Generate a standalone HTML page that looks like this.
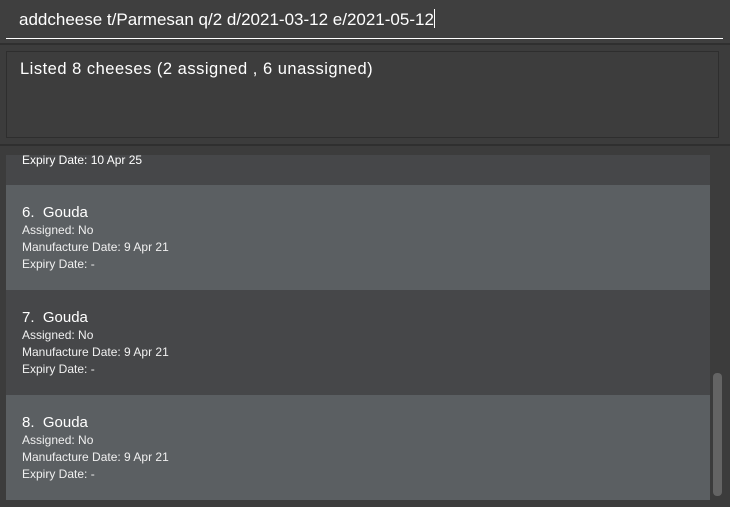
<!DOCTYPE html>
<html><head><style>
*{margin:0;padding:0;box-sizing:border-box}
body{width:730px;height:507px;background:#3c3c3c;font-family:"Liberation Sans",sans-serif;color:#fff;position:relative;overflow:hidden}
.abs{position:absolute}
.cmd{left:0;top:0;width:730px;height:43px;background:#3f3f3f}
.cmd .t{left:19px;top:9px;font-size:17px;letter-spacing:0;white-space:nowrap}
.cmd .u{left:6px;top:38px;width:717px;height:1px;background:#fff}
.sep{left:0;width:730px;height:2px;background:#2f2f2f}
.res{left:6px;top:51px;width:713px;height:87px;border:1px solid #2e2e2e;background:#3d3d3d}
.res .t{left:13px;top:8px;font-size:16.5px;letter-spacing:0.5px;white-space:nowrap}
.cell{left:6px;width:704px;height:105px}
.a{background:#5b5f62}.b{background:#464749}
.cell .h{position:absolute;left:16px;top:19px;font-size:15px;letter-spacing:0}
.cell .d{position:absolute;left:16px;font-size:12px;letter-spacing:0;color:#f0f0f0}
</style></head><body>
<div class="abs cmd"><div class="abs t">addcheese t/Parmesan q/2 d/2021-03-12 e/2021-05-12<span style="display:inline-block;width:1px;height:19px;background:#fff;vertical-align:-3px"></span></div><div class="abs u"></div></div>
<div class="abs sep" style="top:43px"></div>
<div class="abs res"><div class="abs t">Listed 8 cheeses (2 assigned , 6 unassigned)</div></div>
<div class="abs sep" style="top:144px"></div>
<div class="abs b" style="left:6px;top:155px;width:704px;height:30px"><div class="abs" style="left:16px;top:-2px;font-size:12px">Expiry Date: 10 Apr 25</div></div>
<div class="abs cell a" style="top:185px"><div class="h">6.&nbsp; Gouda</div><div class="d" style="top:38px">Assigned: No</div><div class="d" style="top:55px">Manufacture Date: 9 Apr 21</div><div class="d" style="top:72px">Expiry Date: -</div></div>
<div class="abs cell b" style="top:290px"><div class="h">7.&nbsp; Gouda</div><div class="d" style="top:38px">Assigned: No</div><div class="d" style="top:55px">Manufacture Date: 9 Apr 21</div><div class="d" style="top:72px">Expiry Date: -</div></div>
<div class="abs cell a" style="top:395px"><div class="h">8.&nbsp; Gouda</div><div class="d" style="top:38px">Assigned: No</div><div class="d" style="top:55px">Manufacture Date: 9 Apr 21</div><div class="d" style="top:72px">Expiry Date: -</div></div>
<div class="abs" style="left:713px;top:373px;width:9px;height:123px;background:#646464;border-radius:4px"></div>
</body></html>
